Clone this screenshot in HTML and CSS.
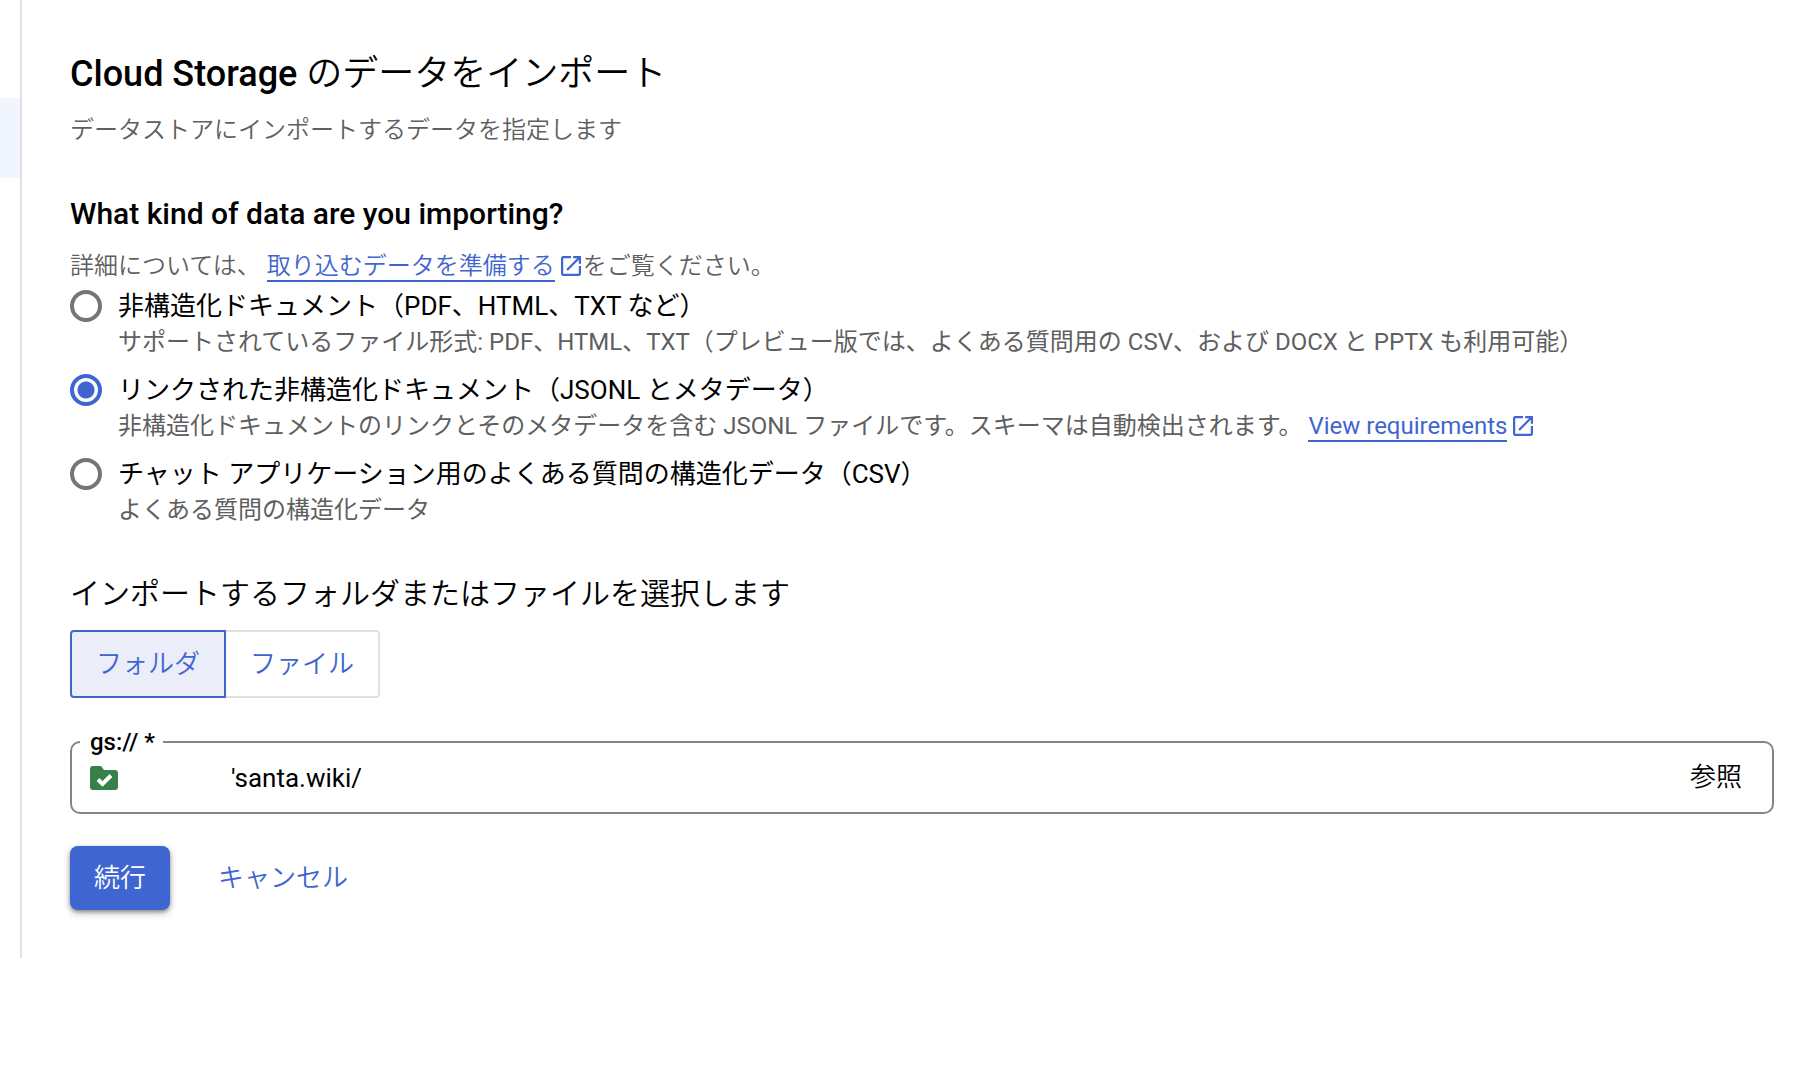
FILE: index.html
```html
<!DOCTYPE html>
<html lang="ja">
  <head>
    <meta charset="UTF-8" />
    <meta name="viewport" content="width=device-width, initial-scale=1.0" />
    <title>Cloud Storage のデータをインポート</title>
    <link rel="stylesheet" href="styles.css">
  </head>
  <body>
    <div class="layout">
      <nav class="sidebar">
        <div class="sidebar-active"></div>
      </nav>
      <main class="content">
        <h1>Cloud Storage <span class="light">のデータをインポート</span></h1>
        <p class="subtitle light">データストアにインポートするデータを指定します</p>

        <form>
          <h2>What kind of data are you importing?</h2>
          <p class="details light">
            詳細については、
            <a href="#">取り込むデータを準備する</a><svg class="external" viewBox="3 3 18 18"><path d="M19 19H5V5h7V3H5a2 2 0 0 0-2 2v14a2 2 0 0 0 2 2h14c1.100 0 2-.9 2-2v-7h-2v7zM14 3v2h3.590l-9.830 9.830 1.410 1.410L19 6.410V10h2V3h-7z"/></svg>をご覧ください。
          </p>

          <div class="options">
            <div class="option">
              <input type="radio" name="kind" id="kind-docs">
              <div>
                <label for="kind-docs">非構造化ドキュメント（PDF、HTML、TXT など）</label>
                <p class="hint">サポートされているファイル形式: PDF、HTML、TXT（プレビュー版では、よくある質問用の CSV、および DOCX と PPTX も利用可能）</p>
              </div>
            </div>
            <div class="option">
              <input type="radio" name="kind" id="kind-linked" checked>
              <div>
                <label for="kind-linked">リンクされた非構造化ドキュメント（JSONL とメタデータ）</label>
                <p class="hint">
                  非構造化ドキュメントのリンクとそのメタデータを含む JSONL ファイルです。スキーマは自動検出されます。
                  <a href="#">View requirements</a><svg class="external" viewBox="3 3 18 18"><path d="M19 19H5V5h7V3H5a2 2 0 0 0-2 2v14a2 2 0 0 0 2 2h14c1.100 0 2-.9 2-2v-7h-2v7zM14 3v2h3.590l-9.830 9.830 1.410 1.410L19 6.410V10h2V3h-7z"/></svg>
                </p>
              </div>
            </div>
            <div class="option">
              <input type="radio" name="kind" id="kind-faq">
              <div>
                <label for="kind-faq">チャット アプリケーション用のよくある質問の構造化データ（CSV）</label>
                <p class="hint">よくある質問の構造化データ</p>
              </div>
            </div>
          </div>

          <h2 class="select-title light">インポートするフォルダまたはファイルを選択します</h2>
          <div class="toggle">
            <button type="button" class="selected">フォルダ</button>
            <button type="button">ファイル</button>
          </div>

          <fieldset class="path">
            <legend><label for="path">gs:// *</label></legend>
            <div class="path-row">
              <svg class="folder" viewBox="0 0 28 24"><path fill="#37804a" d="M3 0h8l3 4h11a3 3 0 0 1 3 3v14a3 3 0 0 1-3 3H3a3 3 0 0 1-3-3V3a3 3 0 0 1 3-3z"/><path fill="none" stroke="#fff" stroke-width="4" d="M8 13.500l4.500 4.500L21 9.500"/></svg>
              <input type="text" id="path" value="'santa.wiki/">
              <button type="button">参照</button>
            </div>
          </fieldset>

          <div class="actions">
            <button type="submit" class="primary">続行</button>
            <button type="button" class="cancel">キャンセル</button>
          </div>
        </form>
      </main>
    </div>
  </body>
</html>
```
FILE: styles.css
```css
* {
  box-sizing: border-box;
}

body {
  margin: 0;
  background-color: #fff;
  color: #000;
  font-family: Roboto, "Noto Sans CJK JP", sans-serif;
  font-size: 24px;
  line-height: 32px;
}

h1,
h2,
p {
  margin: 0;
}

h1 {
  font-size: 36px;
  font-weight: 500;
  line-height: 48px;
}

h2 {
  font-size: 30px;
  font-weight: 500;
  line-height: 40px;
}

.light {
  font-weight: 350;
}

button,
input {
  font-family: inherit;
  font-size: 26px;
}

button {
  background-color: transparent;
  border: 0;
  font-weight: 350;
  cursor: pointer;
}

a {
  color: #3f66d0;
  text-decoration: none;
  border-bottom: 2px solid #3f66d0;
}

.layout {
  display: flex;
}

.sidebar {
  flex: none;
  width: 22px;
  padding-top: 98px;
  border-right: 2px solid #e0e0e0;
}

.sidebar-active {
  height: 80px;
  background-color: #f0f5fe;
}

.content {
  flex: 1;
  padding: 50px 42px 48px 48px;
}

.subtitle {
  margin: 16px 0 48px;
  color: #5f5f5f;
}

.details {
  margin: 16px 0 6px;
  color: #5f5f5f;
}

.external {
  width: 20px;
  height: 20px;
  margin: 0 2px 0 6px;
  vertical-align: -2px;
  fill: #3f66d0;
}

.options {
  display: flex;
  flex-direction: column;
  gap: 14px;
}

.option {
  display: flex;
  gap: 16px;
}

.option input {
  flex: none;
  appearance: none;
  width: 32px;
  height: 32px;
  margin: 2px 0;
  border: 4px solid #757575;
  border-radius: 50%;
}

.option input:checked {
  border-color: #3f66d0;
  background: radial-gradient(#3f66d0 8px, #fff 9px);
}

.option label {
  display: block;
  font-size: 26px;
  line-height: 36px;
}

.hint {
  margin-top: 2px;
  color: #5f5f5f;
}

.select-title {
  margin: 48px 0 16px;
}

.toggle {
  display: flex;
}

.toggle button {
  height: 68px;
  padding: 0 24px 6px;
  color: #3f66d0;
  border: 2px solid #e0e0e0;
  border-left: 0;
  border-radius: 0 4px 4px 0;
}

.toggle .selected {
  background-color: #ebedf9;
  border: 2px solid #3f66d0;
  border-radius: 4px 0 0 4px;
}

.path {
  margin: 32px 0;
  padding: 0 8px;
  border: 2px solid #80868b;
  border-radius: 10px;
}

.path legend {
  padding: 0 8px 0 10px;
  font-weight: 500;
  line-height: 24px;
}

.path-row {
  display: flex;
  align-items: center;
  height: 58px;
  padding: 0 22px 10px 10px;
}

.folder {
  width: 28px;
  height: 24px;
}

.path input {
  flex: 1;
  padding: 0 0 0 113px;
  border: 0;
  outline: 0;
}

.path button {
  padding: 0 0 8px;
}

.actions {
  display: flex;
  gap: 24px;
}

.actions button {
  height: 64px;
  padding: 0 24px 6px;
  border-radius: 8px;
}

.primary {
  color: #fff;
  background-color: #3f66d0;
  box-shadow: 0 2px 4px rgba(0, 0, 0, 0.4), 0 4px 8px rgba(0, 0, 0, 0.15);
}

.cancel {
  color: #3f66d0;
}
```
